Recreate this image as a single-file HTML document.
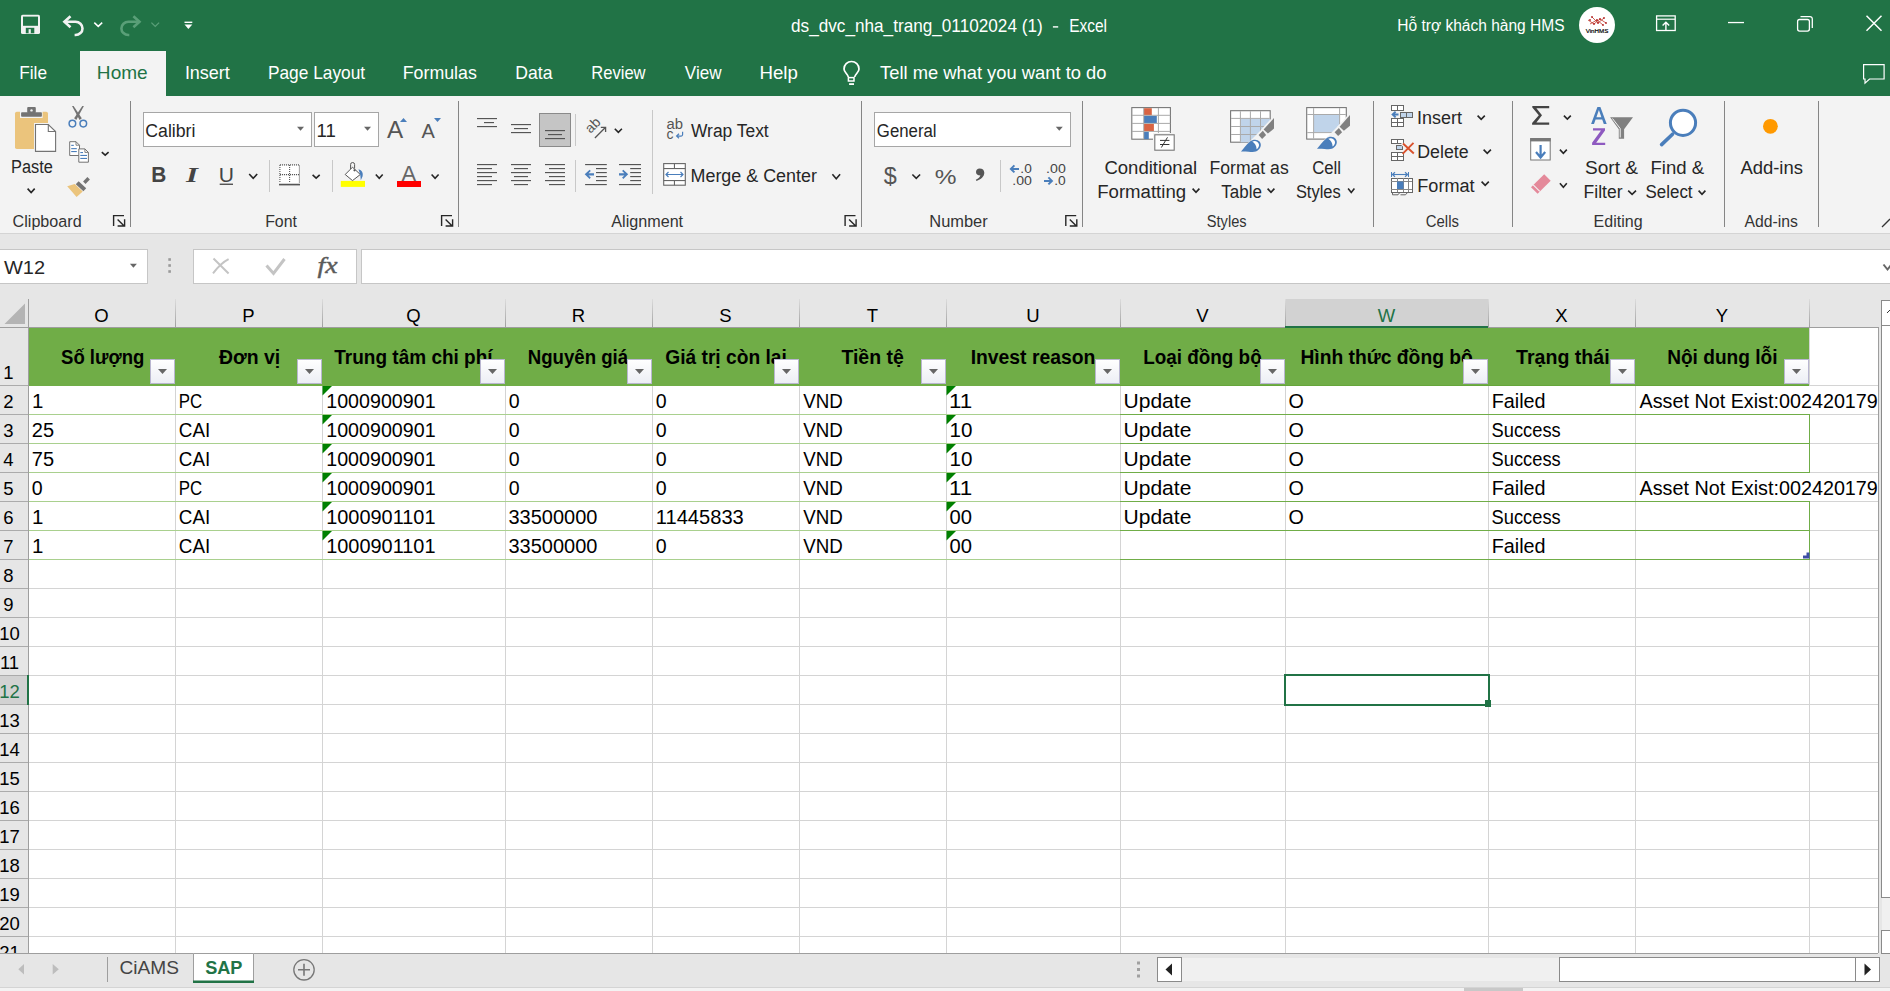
<!DOCTYPE html>
<html><head><meta charset="utf-8"><style>
html,body{margin:0;padding:0;width:1890px;height:991px;overflow:hidden;background:#fff}
svg{display:block;font-family:"Liberation Sans",sans-serif} text{white-space:pre}
</style></head><body>
<svg width="1890" height="991" viewBox="0 0 1890 991">
<rect x="0" y="0" width="1890" height="96" fill="#217346"/>
<rect x="80" y="51" width="86" height="45" fill="#f3f3f3"/>
<rect x="0" y="96" width="1890" height="137" fill="#f3f3f3"/>
<rect x="0" y="233" width="1890" height="1" fill="#d4d4d4"/>
<rect x="0" y="234" width="1890" height="719" fill="#e6e6e6"/>
<text x="791.01" y="31.80" font-size="17.8" font-weight="normal" fill="#ffffff" textLength="251.69" lengthAdjust="spacingAndGlyphs">ds_dvc_nha_trang_01102024 (1)</text>
<rect x="1052.9" y="26.2" width="5.3" height="1.4" fill="#ffffff"/>
<text x="1069.16" y="31.80" font-size="17.8" font-weight="normal" fill="#ffffff" textLength="37.85" lengthAdjust="spacingAndGlyphs">Excel</text>
<text x="1397.26" y="31.00" font-size="16" font-weight="normal" fill="#ffffff" textLength="167.33" lengthAdjust="spacingAndGlyphs">Hỗ trợ khách hàng HMS</text>
<text x="19.22" y="79.40" font-size="19" font-weight="normal" fill="#ffffff" textLength="27.79" lengthAdjust="spacingAndGlyphs">File</text>
<text x="184.88" y="79.40" font-size="19" font-weight="normal" fill="#ffffff" textLength="44.91" lengthAdjust="spacingAndGlyphs">Insert</text>
<text x="267.92" y="79.40" font-size="19" font-weight="normal" fill="#ffffff" textLength="97.18" lengthAdjust="spacingAndGlyphs">Page Layout</text>
<text x="402.78" y="79.40" font-size="19" font-weight="normal" fill="#ffffff" textLength="74.08" lengthAdjust="spacingAndGlyphs">Formulas</text>
<text x="515.29" y="79.40" font-size="19" font-weight="normal" fill="#ffffff" textLength="37.17" lengthAdjust="spacingAndGlyphs">Data</text>
<text x="591.27" y="79.40" font-size="19" font-weight="normal" fill="#ffffff" textLength="54.30" lengthAdjust="spacingAndGlyphs">Review</text>
<text x="684.83" y="79.40" font-size="19" font-weight="normal" fill="#ffffff" textLength="36.66" lengthAdjust="spacingAndGlyphs">View</text>
<text x="759.51" y="79.40" font-size="19" font-weight="normal" fill="#ffffff" textLength="38.36" lengthAdjust="spacingAndGlyphs">Help</text>
<text x="880.03" y="79.40" font-size="19" font-weight="normal" fill="#ffffff" textLength="226.47" lengthAdjust="spacingAndGlyphs">Tell me what you want to do</text>
<text x="96.88" y="79.40" font-size="19" font-weight="normal" fill="#217346" textLength="50.83" lengthAdjust="spacingAndGlyphs">Home</text>
<text x="10.99" y="173.00" font-size="18" font-weight="normal" fill="#262626" textLength="41.78" lengthAdjust="spacingAndGlyphs">Paste</text>
<text x="691.03" y="137.00" font-size="18" font-weight="normal" fill="#262626" textLength="77.65" lengthAdjust="spacingAndGlyphs">Wrap Text</text>
<text x="690.57" y="182.40" font-size="18" font-weight="normal" fill="#262626" textLength="126.28" lengthAdjust="spacingAndGlyphs">Merge &amp; Center</text>
<text x="1104.47" y="173.80" font-size="18" font-weight="normal" fill="#262626" textLength="92.59" lengthAdjust="spacingAndGlyphs">Conditional</text>
<text x="1097.21" y="197.60" font-size="18" font-weight="normal" fill="#262626" textLength="88.87" lengthAdjust="spacingAndGlyphs">Formatting</text>
<text x="1209.59" y="173.80" font-size="18" font-weight="normal" fill="#262626" textLength="79.12" lengthAdjust="spacingAndGlyphs">Format as</text>
<text x="1221.36" y="197.60" font-size="18" font-weight="normal" fill="#262626" textLength="40.49" lengthAdjust="spacingAndGlyphs">Table</text>
<text x="1312.16" y="173.80" font-size="18" font-weight="normal" fill="#262626" textLength="28.89" lengthAdjust="spacingAndGlyphs">Cell</text>
<text x="1295.88" y="197.60" font-size="18" font-weight="normal" fill="#262626" textLength="44.83" lengthAdjust="spacingAndGlyphs">Styles</text>
<text x="1417.08" y="124.20" font-size="18" font-weight="normal" fill="#262626" textLength="44.91" lengthAdjust="spacingAndGlyphs">Insert</text>
<text x="1417.28" y="158.00" font-size="18" font-weight="normal" fill="#262626" textLength="51.32" lengthAdjust="spacingAndGlyphs">Delete</text>
<text x="1417.25" y="192.00" font-size="18" font-weight="normal" fill="#262626" textLength="57.37" lengthAdjust="spacingAndGlyphs">Format</text>
<text x="1585.05" y="174.00" font-size="18" font-weight="normal" fill="#262626" textLength="53.01" lengthAdjust="spacingAndGlyphs">Sort &amp;</text>
<text x="1583.60" y="197.70" font-size="18" font-weight="normal" fill="#262626" textLength="38.91" lengthAdjust="spacingAndGlyphs">Filter</text>
<text x="1650.51" y="174.00" font-size="18" font-weight="normal" fill="#262626" textLength="53.66" lengthAdjust="spacingAndGlyphs">Find &amp;</text>
<text x="1645.55" y="197.70" font-size="18" font-weight="normal" fill="#262626" textLength="47.00" lengthAdjust="spacingAndGlyphs">Select</text>
<text x="1740.40" y="174.00" font-size="18" font-weight="normal" fill="#262626" textLength="62.55" lengthAdjust="spacingAndGlyphs">Add-ins</text>
<text x="12.59" y="226.90" font-size="16.3" font-weight="normal" fill="#333333" textLength="69.04" lengthAdjust="spacingAndGlyphs">Clipboard</text>
<text x="265.13" y="226.90" font-size="16.3" font-weight="normal" fill="#333333" textLength="31.84" lengthAdjust="spacingAndGlyphs">Font</text>
<text x="611.30" y="226.90" font-size="16.3" font-weight="normal" fill="#333333" textLength="71.81" lengthAdjust="spacingAndGlyphs">Alignment</text>
<text x="929.28" y="226.90" font-size="16.3" font-weight="normal" fill="#333333" textLength="58.49" lengthAdjust="spacingAndGlyphs">Number</text>
<text x="1206.77" y="226.90" font-size="16.3" font-weight="normal" fill="#333333" textLength="39.86" lengthAdjust="spacingAndGlyphs">Styles</text>
<text x="1425.75" y="226.90" font-size="16.3" font-weight="normal" fill="#333333" textLength="33.18" lengthAdjust="spacingAndGlyphs">Cells</text>
<text x="1593.52" y="226.90" font-size="16.3" font-weight="normal" fill="#333333" textLength="49.07" lengthAdjust="spacingAndGlyphs">Editing</text>
<text x="1744.50" y="226.90" font-size="16.3" font-weight="normal" fill="#333333" textLength="53.44" lengthAdjust="spacingAndGlyphs">Add-ins</text>
<rect x="143.5" y="112.5" width="168" height="34" fill="#fff" stroke="#a6a6a6" stroke-width="1"/>
<rect x="314.5" y="112.5" width="64" height="34" fill="#fff" stroke="#a6a6a6" stroke-width="1"/>
<rect x="874.5" y="112.5" width="196" height="34" fill="#fff" stroke="#a6a6a6" stroke-width="1"/>
<text x="145.32" y="137.00" font-size="18" font-weight="normal" fill="#262626" textLength="50.11" lengthAdjust="spacingAndGlyphs">Calibri</text>
<text x="316.51" y="137.00" font-size="18" font-weight="normal" fill="#262626" textLength="19.39" lengthAdjust="spacingAndGlyphs">11</text>
<text x="876.86" y="137.00" font-size="18" font-weight="normal" fill="#262626" textLength="59.70" lengthAdjust="spacingAndGlyphs">General</text>
<rect x="130" y="101" width="1" height="126" fill="#858585"/>
<rect x="458" y="101" width="1" height="126" fill="#858585"/>
<rect x="861" y="101" width="1" height="126" fill="#858585"/>
<rect x="1082" y="101" width="1" height="126" fill="#858585"/>
<rect x="1373" y="101" width="1" height="126" fill="#858585"/>
<rect x="1512" y="101" width="1" height="126" fill="#858585"/>
<rect x="1724" y="101" width="1" height="126" fill="#858585"/>
<rect x="1818" y="101" width="1" height="126" fill="#858585"/>
<rect x="-0.5" y="249.5" width="148" height="34" fill="#fff" stroke="#c6c6c6"/>
<rect x="193.5" y="249.5" width="163" height="34" fill="#fff" stroke="#c6c6c6"/>
<rect x="361.5" y="249.5" width="1540" height="34" fill="#fff" stroke="#c6c6c6"/>
<text x="4.00" y="273.90" font-size="18" font-weight="normal" fill="#262626" textLength="41.12" lengthAdjust="spacingAndGlyphs">W12</text>
<rect x="0" y="299" width="1878" height="28" fill="#e6e6e6"/>
<rect x="28" y="328" width="1850" height="625" fill="#ffffff"/>
<rect x="0" y="328" width="28" height="625" fill="#e6e6e6"/>
<rect x="1285" y="299" width="203" height="28" fill="#d2d2d2"/>
<rect x="28" y="385" width="1850" height="1" fill="#d4d4d4"/>
<rect x="0" y="385" width="28" height="1" fill="#ababab"/>
<rect x="28" y="414" width="1850" height="1" fill="#d4d4d4"/>
<rect x="0" y="414" width="28" height="1" fill="#ababab"/>
<rect x="28" y="443" width="1850" height="1" fill="#d4d4d4"/>
<rect x="0" y="443" width="28" height="1" fill="#ababab"/>
<rect x="28" y="472" width="1850" height="1" fill="#d4d4d4"/>
<rect x="0" y="472" width="28" height="1" fill="#ababab"/>
<rect x="28" y="501" width="1850" height="1" fill="#d4d4d4"/>
<rect x="0" y="501" width="28" height="1" fill="#ababab"/>
<rect x="28" y="530" width="1850" height="1" fill="#d4d4d4"/>
<rect x="0" y="530" width="28" height="1" fill="#ababab"/>
<rect x="28" y="559" width="1850" height="1" fill="#d4d4d4"/>
<rect x="0" y="559" width="28" height="1" fill="#ababab"/>
<rect x="28" y="588" width="1850" height="1" fill="#d4d4d4"/>
<rect x="0" y="588" width="28" height="1" fill="#ababab"/>
<rect x="28" y="617" width="1850" height="1" fill="#d4d4d4"/>
<rect x="0" y="617" width="28" height="1" fill="#ababab"/>
<rect x="28" y="646" width="1850" height="1" fill="#d4d4d4"/>
<rect x="0" y="646" width="28" height="1" fill="#ababab"/>
<rect x="28" y="675" width="1850" height="1" fill="#d4d4d4"/>
<rect x="0" y="675" width="28" height="1" fill="#ababab"/>
<rect x="28" y="704" width="1850" height="1" fill="#d4d4d4"/>
<rect x="0" y="704" width="28" height="1" fill="#ababab"/>
<rect x="28" y="733" width="1850" height="1" fill="#d4d4d4"/>
<rect x="0" y="733" width="28" height="1" fill="#ababab"/>
<rect x="28" y="762" width="1850" height="1" fill="#d4d4d4"/>
<rect x="0" y="762" width="28" height="1" fill="#ababab"/>
<rect x="28" y="791" width="1850" height="1" fill="#d4d4d4"/>
<rect x="0" y="791" width="28" height="1" fill="#ababab"/>
<rect x="28" y="820" width="1850" height="1" fill="#d4d4d4"/>
<rect x="0" y="820" width="28" height="1" fill="#ababab"/>
<rect x="28" y="849" width="1850" height="1" fill="#d4d4d4"/>
<rect x="0" y="849" width="28" height="1" fill="#ababab"/>
<rect x="28" y="878" width="1850" height="1" fill="#d4d4d4"/>
<rect x="0" y="878" width="28" height="1" fill="#ababab"/>
<rect x="28" y="907" width="1850" height="1" fill="#d4d4d4"/>
<rect x="0" y="907" width="28" height="1" fill="#ababab"/>
<rect x="28" y="936" width="1850" height="1" fill="#d4d4d4"/>
<rect x="0" y="936" width="28" height="1" fill="#ababab"/>
<rect x="28" y="965" width="1850" height="1" fill="#d4d4d4"/>
<rect x="0" y="965" width="28" height="1" fill="#ababab"/>
<rect x="175" y="328" width="1" height="625" fill="#d4d4d4"/>
<linearGradient id="g175" x1="0" y1="0" x2="0" y2="1"><stop offset="0" stop-color="#dcdcdc"/><stop offset="1" stop-color="#a0a0a0"/></linearGradient>
<rect x="175" y="299" width="1" height="28" fill="url(#g175)"/>
<rect x="322" y="328" width="1" height="625" fill="#d4d4d4"/>
<linearGradient id="g322" x1="0" y1="0" x2="0" y2="1"><stop offset="0" stop-color="#dcdcdc"/><stop offset="1" stop-color="#a0a0a0"/></linearGradient>
<rect x="322" y="299" width="1" height="28" fill="url(#g322)"/>
<rect x="505" y="328" width="1" height="625" fill="#d4d4d4"/>
<linearGradient id="g505" x1="0" y1="0" x2="0" y2="1"><stop offset="0" stop-color="#dcdcdc"/><stop offset="1" stop-color="#a0a0a0"/></linearGradient>
<rect x="505" y="299" width="1" height="28" fill="url(#g505)"/>
<rect x="652" y="328" width="1" height="625" fill="#d4d4d4"/>
<linearGradient id="g652" x1="0" y1="0" x2="0" y2="1"><stop offset="0" stop-color="#dcdcdc"/><stop offset="1" stop-color="#a0a0a0"/></linearGradient>
<rect x="652" y="299" width="1" height="28" fill="url(#g652)"/>
<rect x="799" y="328" width="1" height="625" fill="#d4d4d4"/>
<linearGradient id="g799" x1="0" y1="0" x2="0" y2="1"><stop offset="0" stop-color="#dcdcdc"/><stop offset="1" stop-color="#a0a0a0"/></linearGradient>
<rect x="799" y="299" width="1" height="28" fill="url(#g799)"/>
<rect x="946" y="328" width="1" height="625" fill="#d4d4d4"/>
<linearGradient id="g946" x1="0" y1="0" x2="0" y2="1"><stop offset="0" stop-color="#dcdcdc"/><stop offset="1" stop-color="#a0a0a0"/></linearGradient>
<rect x="946" y="299" width="1" height="28" fill="url(#g946)"/>
<rect x="1120" y="328" width="1" height="625" fill="#d4d4d4"/>
<linearGradient id="g1120" x1="0" y1="0" x2="0" y2="1"><stop offset="0" stop-color="#dcdcdc"/><stop offset="1" stop-color="#a0a0a0"/></linearGradient>
<rect x="1120" y="299" width="1" height="28" fill="url(#g1120)"/>
<rect x="1285" y="328" width="1" height="625" fill="#d4d4d4"/>
<linearGradient id="g1285" x1="0" y1="0" x2="0" y2="1"><stop offset="0" stop-color="#dcdcdc"/><stop offset="1" stop-color="#a0a0a0"/></linearGradient>
<rect x="1285" y="299" width="1" height="28" fill="url(#g1285)"/>
<rect x="1488" y="328" width="1" height="625" fill="#d4d4d4"/>
<linearGradient id="g1488" x1="0" y1="0" x2="0" y2="1"><stop offset="0" stop-color="#dcdcdc"/><stop offset="1" stop-color="#a0a0a0"/></linearGradient>
<rect x="1488" y="299" width="1" height="28" fill="url(#g1488)"/>
<rect x="1635" y="328" width="1" height="625" fill="#d4d4d4"/>
<linearGradient id="g1635" x1="0" y1="0" x2="0" y2="1"><stop offset="0" stop-color="#dcdcdc"/><stop offset="1" stop-color="#a0a0a0"/></linearGradient>
<rect x="1635" y="299" width="1" height="28" fill="url(#g1635)"/>
<rect x="1809" y="328" width="1" height="625" fill="#d4d4d4"/>
<linearGradient id="g1809" x1="0" y1="0" x2="0" y2="1"><stop offset="0" stop-color="#dcdcdc"/><stop offset="1" stop-color="#a0a0a0"/></linearGradient>
<rect x="1809" y="299" width="1" height="28" fill="url(#g1809)"/>
<rect x="0" y="327" width="1878" height="1" fill="#9e9e9e"/>
<rect x="28" y="299" width="1" height="654" fill="#9e9e9e"/>
<rect x="1878" y="327" width="1" height="626" fill="#9e9e9e"/>
<rect x="1285" y="326" width="203" height="2" fill="#217346"/>
<path d="M25,303.5 L25,324 L4.5,324 Z" fill="#b4b4b4"/>
<text x="101.5" y="321.6" font-size="18.5" text-anchor="middle" fill="#000000">O</text>
<text x="248.5" y="321.6" font-size="18.5" text-anchor="middle" fill="#000000">P</text>
<text x="413.5" y="321.6" font-size="18.5" text-anchor="middle" fill="#000000">Q</text>
<text x="578.5" y="321.6" font-size="18.5" text-anchor="middle" fill="#000000">R</text>
<text x="725.5" y="321.6" font-size="18.5" text-anchor="middle" fill="#000000">S</text>
<text x="872.5" y="321.6" font-size="18.5" text-anchor="middle" fill="#000000">T</text>
<text x="1033.0" y="321.6" font-size="18.5" text-anchor="middle" fill="#000000">U</text>
<text x="1202.5" y="321.6" font-size="18.5" text-anchor="middle" fill="#000000">V</text>
<text x="1386.5" y="321.6" font-size="18.5" text-anchor="middle" fill="#217346">W</text>
<text x="1561.5" y="321.6" font-size="18.5" text-anchor="middle" fill="#000000">X</text>
<text x="1722.0" y="321.6" font-size="18.5" text-anchor="middle" fill="#000000">Y</text>
<rect x="0" y="676" width="28" height="28" fill="#d2d2d2"/>
<rect x="27" y="675" width="2" height="30" fill="#217346"/>
<text x="8.5" y="378.5" font-size="18.5" text-anchor="middle" fill="#000000">1</text>
<text x="8.5" y="407.5" font-size="18.5" text-anchor="middle" fill="#000000">2</text>
<text x="8.5" y="436.5" font-size="18.5" text-anchor="middle" fill="#000000">3</text>
<text x="8.5" y="465.5" font-size="18.5" text-anchor="middle" fill="#000000">4</text>
<text x="8.5" y="494.5" font-size="18.5" text-anchor="middle" fill="#000000">5</text>
<text x="8.5" y="523.5" font-size="18.5" text-anchor="middle" fill="#000000">6</text>
<text x="8.5" y="552.5" font-size="18.5" text-anchor="middle" fill="#000000">7</text>
<text x="8.5" y="581.5" font-size="18.5" text-anchor="middle" fill="#000000">8</text>
<text x="8.5" y="610.5" font-size="18.5" text-anchor="middle" fill="#000000">9</text>
<text x="9.5" y="639.5" font-size="18.5" text-anchor="middle" fill="#000000">10</text>
<text x="9.5" y="668.5" font-size="18.5" text-anchor="middle" fill="#000000">11</text>
<text x="9.5" y="697.5" font-size="18.5" text-anchor="middle" fill="#217346">12</text>
<text x="9.5" y="726.5" font-size="18.5" text-anchor="middle" fill="#000000">13</text>
<text x="9.5" y="755.5" font-size="18.5" text-anchor="middle" fill="#000000">14</text>
<text x="9.5" y="784.5" font-size="18.5" text-anchor="middle" fill="#000000">15</text>
<text x="9.5" y="813.5" font-size="18.5" text-anchor="middle" fill="#000000">16</text>
<text x="9.5" y="842.5" font-size="18.5" text-anchor="middle" fill="#000000">17</text>
<text x="9.5" y="871.5" font-size="18.5" text-anchor="middle" fill="#000000">18</text>
<text x="9.5" y="900.5" font-size="18.5" text-anchor="middle" fill="#000000">19</text>
<text x="9.5" y="929.5" font-size="18.5" text-anchor="middle" fill="#000000">20</text>
<text x="9.5" y="958.5" font-size="18.5" text-anchor="middle" fill="#000000">21</text>
<rect x="29" y="328" width="1780" height="58" fill="#70ad47"/>
<rect x="1120" y="385" width="689" height="1" fill="#66a53b"/>
<text x="61.04" y="364.00" font-size="19.5" font-weight="bold" fill="#000000" textLength="83.25" lengthAdjust="spacingAndGlyphs">Số lượng</text>
<text x="219.00" y="364.00" font-size="19.5" font-weight="bold" fill="#000000" textLength="61.17" lengthAdjust="spacingAndGlyphs">Đơn vị</text>
<text x="334.31" y="364.00" font-size="19.5" font-weight="bold" fill="#000000" textLength="158.29" lengthAdjust="spacingAndGlyphs">Trung tâm chi phí</text>
<text x="527.69" y="364.00" font-size="19.5" font-weight="bold" fill="#000000" textLength="100.49" lengthAdjust="spacingAndGlyphs">Nguyên giá</text>
<text x="665.23" y="364.00" font-size="19.5" font-weight="bold" fill="#000000" textLength="121.61" lengthAdjust="spacingAndGlyphs">Giá trị còn lại</text>
<text x="841.41" y="364.00" font-size="19.5" font-weight="bold" fill="#000000" textLength="62.46" lengthAdjust="spacingAndGlyphs">Tiền tệ</text>
<text x="970.65" y="364.00" font-size="19.5" font-weight="bold" fill="#000000" textLength="124.65" lengthAdjust="spacingAndGlyphs">Invest reason</text>
<text x="1143.18" y="364.00" font-size="19.5" font-weight="bold" fill="#000000" textLength="118.50" lengthAdjust="spacingAndGlyphs">Loại đồng bộ</text>
<text x="1300.45" y="364.00" font-size="19.5" font-weight="bold" fill="#000000" textLength="172.39" lengthAdjust="spacingAndGlyphs">Hình thức đồng bộ</text>
<text x="1516.10" y="364.00" font-size="19.5" font-weight="bold" fill="#000000" textLength="93.53" lengthAdjust="spacingAndGlyphs">Trạng thái</text>
<text x="1667.16" y="364.00" font-size="19.5" font-weight="bold" fill="#000000" textLength="110.30" lengthAdjust="spacingAndGlyphs">Nội dung lỗi</text>
<linearGradient id="fb" x1="0" y1="0" x2="0" y2="1"><stop offset="0" stop-color="#ffffff"/><stop offset="1" stop-color="#eceef4"/></linearGradient>
<rect x="150.5" y="359.5" width="24" height="24" fill="url(#fb)" stroke="#b9b6d0" stroke-width="1"/>
<path d="M158,369 L167,369 L162.5,374 Z" fill="#666"/>
<rect x="297.5" y="359.5" width="24" height="24" fill="url(#fb)" stroke="#b9b6d0" stroke-width="1"/>
<path d="M305,369 L314,369 L309.5,374 Z" fill="#666"/>
<rect x="480.5" y="359.5" width="24" height="24" fill="url(#fb)" stroke="#b9b6d0" stroke-width="1"/>
<path d="M488,369 L497,369 L492.5,374 Z" fill="#666"/>
<rect x="627.5" y="359.5" width="24" height="24" fill="url(#fb)" stroke="#b9b6d0" stroke-width="1"/>
<path d="M635,369 L644,369 L639.5,374 Z" fill="#666"/>
<rect x="774.5" y="359.5" width="24" height="24" fill="url(#fb)" stroke="#b9b6d0" stroke-width="1"/>
<path d="M782,369 L791,369 L786.5,374 Z" fill="#666"/>
<rect x="921.5" y="359.5" width="24" height="24" fill="url(#fb)" stroke="#b9b6d0" stroke-width="1"/>
<path d="M929,369 L938,369 L933.5,374 Z" fill="#666"/>
<rect x="1095.5" y="359.5" width="24" height="24" fill="url(#fb)" stroke="#b9b6d0" stroke-width="1"/>
<path d="M1103,369 L1112,369 L1107.5,374 Z" fill="#666"/>
<rect x="1260.5" y="359.5" width="24" height="24" fill="url(#fb)" stroke="#b9b6d0" stroke-width="1"/>
<path d="M1268,369 L1277,369 L1272.5,374 Z" fill="#666"/>
<rect x="1463.5" y="359.5" width="24" height="24" fill="url(#fb)" stroke="#b9b6d0" stroke-width="1"/>
<path d="M1471,369 L1480,369 L1475.5,374 Z" fill="#666"/>
<rect x="1610.5" y="359.5" width="24" height="24" fill="url(#fb)" stroke="#b9b6d0" stroke-width="1"/>
<path d="M1618,369 L1627,369 L1622.5,374 Z" fill="#666"/>
<rect x="1784.5" y="359.5" width="24" height="24" fill="url(#fb)" stroke="#b9b6d0" stroke-width="1"/>
<path d="M1792,369 L1801,369 L1796.5,374 Z" fill="#666"/>
<rect x="29" y="414" width="1091" height="1" fill="#a9d08e"/>
<rect x="1120" y="414" width="689" height="1" fill="#70ad47"/>
<rect x="29" y="443" width="1091" height="1" fill="#a9d08e"/>
<rect x="1120" y="443" width="689" height="1" fill="#70ad47"/>
<rect x="29" y="472" width="1091" height="1" fill="#a9d08e"/>
<rect x="1120" y="472" width="689" height="1" fill="#70ad47"/>
<rect x="29" y="501" width="1091" height="1" fill="#a9d08e"/>
<rect x="1120" y="501" width="689" height="1" fill="#70ad47"/>
<rect x="29" y="530" width="1091" height="1" fill="#a9d08e"/>
<rect x="1120" y="530" width="689" height="1" fill="#70ad47"/>
<rect x="29" y="559" width="1091" height="1" fill="#a9d08e"/>
<rect x="1120" y="559" width="689" height="1" fill="#70ad47"/>
<rect x="1809" y="414" width="1" height="30" fill="#70ad47"/>
<rect x="1809" y="443" width="1" height="30" fill="#70ad47"/>
<rect x="1809" y="501" width="1" height="30" fill="#70ad47"/>
<rect x="1809" y="530" width="1" height="30" fill="#70ad47"/>
<rect x="1809" y="386" width="1" height="28" fill="#ffffff"/>
<rect x="1809" y="473" width="1" height="28" fill="#ffffff"/>
<path d="M1803,558.5 L1809.5,558.5 L1809.5,552.5 L1806.5,552.5 L1806.5,555.5 L1803,555.5 Z" fill="#3e4ea6"/>
<clipPath id="gc"><rect x="29" y="328" width="1849" height="625"/></clipPath>
<g clip-path="url(#gc)">
<text x="31.96" y="407.70" font-size="19.3" font-weight="normal" fill="#000000" textLength="11.38" lengthAdjust="spacingAndGlyphs">1</text>
<text x="178.65" y="407.70" font-size="19.3" font-weight="normal" fill="#000000" textLength="23.41" lengthAdjust="spacingAndGlyphs">PC</text>
<text x="326.23" y="407.70" font-size="19.3" font-weight="normal" fill="#000000" textLength="109.38" lengthAdjust="spacingAndGlyphs">1000900901</text>
<text x="508.82" y="407.70" font-size="19.3" font-weight="normal" fill="#000000" textLength="10.89" lengthAdjust="spacingAndGlyphs">0</text>
<text x="655.82" y="407.70" font-size="19.3" font-weight="normal" fill="#000000" textLength="10.89" lengthAdjust="spacingAndGlyphs">0</text>
<text x="803.21" y="407.70" font-size="19.3" font-weight="normal" fill="#000000" textLength="39.55" lengthAdjust="spacingAndGlyphs">VND</text>
<text x="949.01" y="407.70" font-size="19.3" font-weight="normal" fill="#000000" textLength="23.27" lengthAdjust="spacingAndGlyphs">11</text>
<text x="1123.52" y="407.70" font-size="19.3" font-weight="normal" fill="#000000" textLength="67.82" lengthAdjust="spacingAndGlyphs">Update</text>
<text x="1288.61" y="407.70" font-size="19.3" font-weight="normal" fill="#000000" textLength="15.33" lengthAdjust="spacingAndGlyphs">O</text>
<text x="1491.72" y="407.70" font-size="19.3" font-weight="normal" fill="#000000" textLength="53.84" lengthAdjust="spacingAndGlyphs">Failed</text>
<text x="1639.50" y="407.70" font-size="19.3" font-weight="normal" fill="#000000" textLength="238.34" lengthAdjust="spacingAndGlyphs">Asset Not Exist:002420179</text>
<path d="M322.5,386 L332.0,386 L322.5,395.5 Z" fill="#008000"/>
<path d="M946.5,386 L956.0,386 L946.5,395.5 Z" fill="#008000"/>
<text x="31.80" y="436.70" font-size="19.3" font-weight="normal" fill="#000000" textLength="22.24" lengthAdjust="spacingAndGlyphs">25</text>
<text x="178.86" y="436.70" font-size="19.3" font-weight="normal" fill="#000000" textLength="31.38" lengthAdjust="spacingAndGlyphs">CAI</text>
<text x="326.23" y="436.70" font-size="19.3" font-weight="normal" fill="#000000" textLength="109.38" lengthAdjust="spacingAndGlyphs">1000900901</text>
<text x="508.82" y="436.70" font-size="19.3" font-weight="normal" fill="#000000" textLength="10.89" lengthAdjust="spacingAndGlyphs">0</text>
<text x="655.82" y="436.70" font-size="19.3" font-weight="normal" fill="#000000" textLength="10.89" lengthAdjust="spacingAndGlyphs">0</text>
<text x="803.21" y="436.70" font-size="19.3" font-weight="normal" fill="#000000" textLength="39.55" lengthAdjust="spacingAndGlyphs">VND</text>
<text x="949.45" y="436.70" font-size="19.3" font-weight="normal" fill="#000000" textLength="22.91" lengthAdjust="spacingAndGlyphs">10</text>
<text x="1123.52" y="436.70" font-size="19.3" font-weight="normal" fill="#000000" textLength="67.82" lengthAdjust="spacingAndGlyphs">Update</text>
<text x="1288.61" y="436.70" font-size="19.3" font-weight="normal" fill="#000000" textLength="15.33" lengthAdjust="spacingAndGlyphs">O</text>
<text x="1491.59" y="436.70" font-size="19.3" font-weight="normal" fill="#000000" textLength="69.13" lengthAdjust="spacingAndGlyphs">Success</text>
<path d="M322.5,415 L332.0,415 L322.5,424.5 Z" fill="#008000"/>
<path d="M946.5,415 L956.0,415 L946.5,424.5 Z" fill="#008000"/>
<text x="31.80" y="465.70" font-size="19.3" font-weight="normal" fill="#000000" textLength="22.24" lengthAdjust="spacingAndGlyphs">75</text>
<text x="178.86" y="465.70" font-size="19.3" font-weight="normal" fill="#000000" textLength="31.38" lengthAdjust="spacingAndGlyphs">CAI</text>
<text x="326.23" y="465.70" font-size="19.3" font-weight="normal" fill="#000000" textLength="109.38" lengthAdjust="spacingAndGlyphs">1000900901</text>
<text x="508.82" y="465.70" font-size="19.3" font-weight="normal" fill="#000000" textLength="10.89" lengthAdjust="spacingAndGlyphs">0</text>
<text x="655.82" y="465.70" font-size="19.3" font-weight="normal" fill="#000000" textLength="10.89" lengthAdjust="spacingAndGlyphs">0</text>
<text x="803.21" y="465.70" font-size="19.3" font-weight="normal" fill="#000000" textLength="39.55" lengthAdjust="spacingAndGlyphs">VND</text>
<text x="949.45" y="465.70" font-size="19.3" font-weight="normal" fill="#000000" textLength="22.91" lengthAdjust="spacingAndGlyphs">10</text>
<text x="1123.52" y="465.70" font-size="19.3" font-weight="normal" fill="#000000" textLength="67.82" lengthAdjust="spacingAndGlyphs">Update</text>
<text x="1288.61" y="465.70" font-size="19.3" font-weight="normal" fill="#000000" textLength="15.33" lengthAdjust="spacingAndGlyphs">O</text>
<text x="1491.59" y="465.70" font-size="19.3" font-weight="normal" fill="#000000" textLength="69.13" lengthAdjust="spacingAndGlyphs">Success</text>
<path d="M322.5,444 L332.0,444 L322.5,453.5 Z" fill="#008000"/>
<path d="M946.5,444 L956.0,444 L946.5,453.5 Z" fill="#008000"/>
<text x="31.82" y="494.70" font-size="19.3" font-weight="normal" fill="#000000" textLength="10.89" lengthAdjust="spacingAndGlyphs">0</text>
<text x="178.65" y="494.70" font-size="19.3" font-weight="normal" fill="#000000" textLength="23.41" lengthAdjust="spacingAndGlyphs">PC</text>
<text x="326.23" y="494.70" font-size="19.3" font-weight="normal" fill="#000000" textLength="109.38" lengthAdjust="spacingAndGlyphs">1000900901</text>
<text x="508.82" y="494.70" font-size="19.3" font-weight="normal" fill="#000000" textLength="10.89" lengthAdjust="spacingAndGlyphs">0</text>
<text x="655.82" y="494.70" font-size="19.3" font-weight="normal" fill="#000000" textLength="10.89" lengthAdjust="spacingAndGlyphs">0</text>
<text x="803.21" y="494.70" font-size="19.3" font-weight="normal" fill="#000000" textLength="39.55" lengthAdjust="spacingAndGlyphs">VND</text>
<text x="949.01" y="494.70" font-size="19.3" font-weight="normal" fill="#000000" textLength="23.27" lengthAdjust="spacingAndGlyphs">11</text>
<text x="1123.52" y="494.70" font-size="19.3" font-weight="normal" fill="#000000" textLength="67.82" lengthAdjust="spacingAndGlyphs">Update</text>
<text x="1288.61" y="494.70" font-size="19.3" font-weight="normal" fill="#000000" textLength="15.33" lengthAdjust="spacingAndGlyphs">O</text>
<text x="1491.72" y="494.70" font-size="19.3" font-weight="normal" fill="#000000" textLength="53.84" lengthAdjust="spacingAndGlyphs">Failed</text>
<text x="1639.50" y="494.70" font-size="19.3" font-weight="normal" fill="#000000" textLength="238.34" lengthAdjust="spacingAndGlyphs">Asset Not Exist:002420179</text>
<path d="M322.5,473 L332.0,473 L322.5,482.5 Z" fill="#008000"/>
<path d="M946.5,473 L956.0,473 L946.5,482.5 Z" fill="#008000"/>
<text x="31.96" y="523.70" font-size="19.3" font-weight="normal" fill="#000000" textLength="11.38" lengthAdjust="spacingAndGlyphs">1</text>
<text x="178.86" y="523.70" font-size="19.3" font-weight="normal" fill="#000000" textLength="31.38" lengthAdjust="spacingAndGlyphs">CAI</text>
<text x="326.21" y="523.70" font-size="19.3" font-weight="normal" fill="#000000" textLength="109.32" lengthAdjust="spacingAndGlyphs">1000901101</text>
<text x="508.50" y="523.70" font-size="19.3" font-weight="normal" fill="#000000" textLength="88.87" lengthAdjust="spacingAndGlyphs">33500000</text>
<text x="655.79" y="523.70" font-size="19.3" font-weight="normal" fill="#000000" textLength="88.01" lengthAdjust="spacingAndGlyphs">11445833</text>
<text x="803.21" y="523.70" font-size="19.3" font-weight="normal" fill="#000000" textLength="39.55" lengthAdjust="spacingAndGlyphs">VND</text>
<text x="949.49" y="523.70" font-size="19.3" font-weight="normal" fill="#000000" textLength="22.46" lengthAdjust="spacingAndGlyphs">00</text>
<text x="1123.52" y="523.70" font-size="19.3" font-weight="normal" fill="#000000" textLength="67.82" lengthAdjust="spacingAndGlyphs">Update</text>
<text x="1288.61" y="523.70" font-size="19.3" font-weight="normal" fill="#000000" textLength="15.33" lengthAdjust="spacingAndGlyphs">O</text>
<text x="1491.59" y="523.70" font-size="19.3" font-weight="normal" fill="#000000" textLength="69.13" lengthAdjust="spacingAndGlyphs">Success</text>
<path d="M322.5,502 L332.0,502 L322.5,511.5 Z" fill="#008000"/>
<path d="M946.5,502 L956.0,502 L946.5,511.5 Z" fill="#008000"/>
<text x="31.96" y="552.70" font-size="19.3" font-weight="normal" fill="#000000" textLength="11.38" lengthAdjust="spacingAndGlyphs">1</text>
<text x="178.86" y="552.70" font-size="19.3" font-weight="normal" fill="#000000" textLength="31.38" lengthAdjust="spacingAndGlyphs">CAI</text>
<text x="326.21" y="552.70" font-size="19.3" font-weight="normal" fill="#000000" textLength="109.32" lengthAdjust="spacingAndGlyphs">1000901101</text>
<text x="508.50" y="552.70" font-size="19.3" font-weight="normal" fill="#000000" textLength="88.87" lengthAdjust="spacingAndGlyphs">33500000</text>
<text x="655.82" y="552.70" font-size="19.3" font-weight="normal" fill="#000000" textLength="10.89" lengthAdjust="spacingAndGlyphs">0</text>
<text x="803.21" y="552.70" font-size="19.3" font-weight="normal" fill="#000000" textLength="39.55" lengthAdjust="spacingAndGlyphs">VND</text>
<text x="949.49" y="552.70" font-size="19.3" font-weight="normal" fill="#000000" textLength="22.46" lengthAdjust="spacingAndGlyphs">00</text>
<text x="1491.72" y="552.70" font-size="19.3" font-weight="normal" fill="#000000" textLength="53.84" lengthAdjust="spacingAndGlyphs">Failed</text>
<path d="M322.5,531 L332.0,531 L322.5,540.5 Z" fill="#008000"/>
<path d="M946.5,531 L956.0,531 L946.5,540.5 Z" fill="#008000"/>
</g>
<rect x="1285" y="675" width="204" height="30" fill="none" stroke="#217346" stroke-width="2"/>
<rect x="1485" y="700" width="6" height="7" fill="#217346" stroke="#fff" stroke-width="0"/>
<rect x="0" y="953" width="1890" height="38" fill="#e6e6e6"/>
<rect x="0" y="953" width="1878" height="1" fill="#9e9e9e"/>
<rect x="0" y="987" width="1890" height="4" fill="#f3f3f3"/>
<rect x="0" y="987" width="1890" height="1" fill="#d4d4d4"/>
<rect x="1464" y="988" width="59" height="3" fill="#c8c8c8"/>
<path d="M24,964 L24,974.5 L18.3,969.2 Z" fill="#bdbdbd"/>
<path d="M52.7,964 L52.7,974.5 L58.8,969.2 Z" fill="#bdbdbd"/>
<rect x="107" y="957" width="1" height="25" fill="#9e9e9e"/>
<text x="119.54" y="974.00" font-size="18" font-weight="normal" fill="#444444" textLength="59.44" lengthAdjust="spacingAndGlyphs">CiAMS</text>
<rect x="193.5" y="953" width="60" height="29" fill="#ffffff"/>
<path d="M193.5,982 L193.5,953.5 L253.5,953.5 L253.5,982" fill="none" stroke="#9e9e9e" stroke-width="1"/>
<rect x="193" y="980.5" width="61" height="2.5" fill="#217346"/>
<text x="205.16" y="974.00" font-size="18.5" font-weight="bold" fill="#217346" textLength="37.30" lengthAdjust="spacingAndGlyphs">SAP</text>
<circle cx="304" cy="969.8" r="10.2" fill="none" stroke="#777" stroke-width="1.3"/>
<path d="M298,969.8 H310 M304,963.8 V975.8" stroke="#777" stroke-width="1.6"/>
<rect x="1137" y="961.5" width="3" height="3" fill="#a0a0a0"/>
<rect x="1137" y="968.0" width="3" height="3" fill="#a0a0a0"/>
<rect x="1137" y="974.5" width="3" height="3" fill="#a0a0a0"/>
<rect x="1157.5" y="957.5" width="24" height="24" fill="#ffffff" stroke="#8a8a8a"/>
<path d="M1165.5,969.5 L1172,963.5 L1172,975.5 Z" fill="#222"/>
<rect x="1182" y="958" width="673" height="23" fill="#f0f0f0"/>
<rect x="1559.5" y="957.5" width="296" height="24" fill="#ffffff" stroke="#8a8a8a"/>
<rect x="1855.5" y="957.5" width="24" height="24" fill="#ffffff" stroke="#8a8a8a"/>
<path d="M1871,969.5 L1864.5,963.5 L1864.5,975.5 Z" fill="#222"/>
<rect x="1879" y="299" width="11" height="654" fill="#e6e6e6"/>
<rect x="1881.5" y="300.5" width="12" height="25" fill="#ffffff" stroke="#8a8a8a"/>
<rect x="1881.5" y="325.5" width="12" height="572" fill="#ffffff" stroke="#8a8a8a"/>
<rect x="1882" y="898" width="8" height="32" fill="#f0f0f0"/>
<rect x="1881.5" y="930.5" width="12" height="23" fill="#ffffff" stroke="#8a8a8a"/>
<rect x="21" y="14.8" width="19" height="19.3" rx="1.6" fill="#f2f2f2"/>
<rect x="23" y="16.6" width="15" height="9.2" fill="#217346"/>
<rect x="25.8" y="27.8" width="8.5" height="5.5" fill="#217346"/>
<rect x="28.6" y="29.2" width="2.2" height="4.2" fill="#f2f2f2"/>
<path d="M64.5,21.8 H75.5 A7,6.6 0 0 1 75.5,35 H74.6" fill="none" stroke="#f2f2f2" stroke-width="2.6"/>
<path d="M70.5,16.2 L64.4,21.8 L70.5,27.2" fill="none" stroke="#f2f2f2" stroke-width="2.6"/>
<path d="M94.3,22.6 L98.25,26.4 L102.2,22.6" fill="none" stroke="#ffffff" stroke-width="1.5"/>
<path d="M139.4,21.8 H128.4 A7,6.6 0 0 0 128.4,35 H129.3" fill="none" stroke="#5a9f78" stroke-width="2.6"/>
<path d="M133.4,16.2 L139.5,21.8 L133.4,27.2" fill="none" stroke="#5a9f78" stroke-width="2.6"/>
<path d="M151.4,22.6 L155.25,26.4 L159.1,22.6" fill="none" stroke="#5a9f78" stroke-width="1.3"/>
<rect x="184.5" y="21.6" width="7.8" height="1.4" fill="#ffffff"/>
<path d="M184.5,24.5 L192.3,24.5 L188.4,29 Z" fill="#ffffff"/>
<circle cx="1597" cy="25" r="18" fill="#ffffff"/>
<path d="M1588,20 L1594,24 L1600,19 L1606,23 M1590,24 L1597,20 L1603,25 M1592,17 L1598,23 L1604,18" stroke="#c0392b" stroke-width="0.8" fill="none"/>
<circle cx="1590" cy="20" r="0.9" fill="#b22222"/>
<circle cx="1594" cy="24" r="0.9" fill="#b22222"/>
<circle cx="1600" cy="19" r="0.9" fill="#b22222"/>
<circle cx="1606" cy="23" r="0.9" fill="#b22222"/>
<circle cx="1597" cy="20" r="0.9" fill="#b22222"/>
<circle cx="1603" cy="25" r="0.9" fill="#b22222"/>
<circle cx="1592" cy="17" r="0.9" fill="#b22222"/>
<circle cx="1598" cy="23" r="0.9" fill="#b22222"/>
<circle cx="1604" cy="18" r="0.9" fill="#b22222"/>
<text x="1597" y="32.5" font-size="6.2" text-anchor="middle" fill="#000" stroke="#000" stroke-width="0.2">VinHMS</text>
<rect x="1656.6" y="15.9" width="18.6" height="14.6" fill="none" stroke="#fff" stroke-width="1.3"/>
<rect x="1656.6" y="18.6" width="18.6" height="1.2" fill="#fff"/>
<path d="M1665.9,30.5 V22.4 M1662.6,25.4 L1665.9,22.2 L1669.2,25.4" fill="none" stroke="#fff" stroke-width="1.4"/>
<rect x="1728" y="21.9" width="16" height="1.3" fill="#fff"/>
<rect x="1797.6" y="19.5" width="11.8" height="11.6" rx="2" fill="none" stroke="#fff" stroke-width="1.3"/>
<path d="M1800.5,16.6 H1810 A2.3,2.3 0 0 1 1812.3,18.9 V28" fill="none" stroke="#fff" stroke-width="1.3"/>
<path d="M1866.5,15.8 L1881.5,30.8 M1881.5,15.8 L1866.5,30.8" stroke="#fff" stroke-width="1.5"/>
<path d="M1863.6,64.6 H1884.1 V79 H1869.5 L1865,83.2 V79 H1863.6 Z" fill="none" stroke="#fff" stroke-width="1.2"/>
<path d="M848.3,77 C848,74.2 844,72.4 844,69 A7.5,7.5 0 0 1 859,69 C859,72.4 855,74.2 854.7,77" fill="none" stroke="#fff" stroke-width="1.7"/>
<rect x="848.4" y="77.6" width="5.6" height="3.4" fill="none" stroke="#fff" stroke-width="1.5"/>
<rect x="849.1" y="83.2" width="4.9" height="1.8" fill="#fff"/>
<rect x="15" y="111.8" width="33" height="37.3" rx="1.8" fill="#ebc47c"/>
<rect x="20" y="111" width="22.6" height="7" fill="#f3f3f3"/>
<rect x="21.1" y="112.2" width="20.8" height="4.5" rx="0.8" fill="#737373"/>
<rect x="27.2" y="107.1" width="8.6" height="6" rx="1" fill="#737373"/>
<circle cx="31.5" cy="110.4" r="1.2" fill="#f3f3f3"/>
<path d="M34,123 H49 L57.2,130.8 V153 H34 Z" fill="#f3f3f3"/>
<path d="M35.5,124.5 H48.3 L55.6,131.5 V151.4 H35.5 Z" fill="#fff" stroke="#737373" stroke-width="1.1"/>
<path d="M48.3,124.5 V131.5 H55.6" fill="none" stroke="#737373" stroke-width="1.1"/>
<path d="M27.6,188.6 L31.15,192.5 L34.699999999999996,188.6" fill="none" stroke="#262626" stroke-width="1.6"/>
<path d="M72,106 L73.6,106 L81.8,118.2 L79.6,120 Z" fill="#737373"/>
<path d="M83.9,106 L82.3,106 L74.1,118.2 L76.3,120 Z" fill="#737373"/>
<circle cx="72.4" cy="123.6" r="3.3" fill="none" stroke="#4a7ebb" stroke-width="1.5"/>
<circle cx="83.3" cy="123.6" r="3.3" fill="none" stroke="#4a7ebb" stroke-width="1.5"/>
<path d="M69.7,141.7 H76.0 L79.5,145.2 V155.5 H69.7 Z" fill="#fff" stroke="#737373" stroke-width="1"/>
<path d="M76.0,141.7 V145.2 H79.5" fill="none" stroke="#737373" stroke-width="0.9"/>
<path d="M78.8,148.9 H84.9 L88.4,152.4 V162.2 H78.8 Z" fill="#fff" stroke="#737373" stroke-width="1"/>
<path d="M84.9,148.9 V152.4 H88.4" fill="none" stroke="#737373" stroke-width="0.9"/>
<rect x="71.2" y="144.8" width="2.5999999999999943" height="1.1" fill="#4a7ebb"/>
<rect x="71.2" y="148.1" width="5.599999999999994" height="1.1" fill="#4a7ebb"/>
<rect x="71.2" y="151.0" width="5.599999999999994" height="1.1" fill="#4a7ebb"/>
<rect x="80.3" y="152.0" width="2.700000000000003" height="1.1" fill="#4a7ebb"/>
<rect x="80.3" y="154.9" width="6.700000000000003" height="1.1" fill="#4a7ebb"/>
<rect x="80.3" y="157.9" width="6.700000000000003" height="1.1" fill="#4a7ebb"/>
<path d="M101.8,152.1 L105.2,155.20000000000002 L108.60000000000001,152.1" fill="none" stroke="#262626" stroke-width="1.6"/>
<path d="M67.2,186.3 L74.7,184 L82.7,191.4 L76.6,197.1 Z" fill="#ebc47c"/>
<path d="M75.8,184.2 L78.6,181.2 L86.2,188.2 L83.4,191.2 Z" fill="#737373"/>
<path d="M83.1,181.4 L87.4,177 L89.9,179.5 L85.5,184 Z" fill="#737373"/>
<path d="M113.6,226 V215.6 H124" fill="none" stroke="#262626" stroke-width="1.4"/>
<path d="M117.6,219.4 L124.2,226 M117.6,226 H124.6 V219.2" fill="none" stroke="#262626" stroke-width="1.4"/>
<path d="M441.6,226 V215.6 H452" fill="none" stroke="#262626" stroke-width="1.4"/>
<path d="M445.6,219.4 L452.2,226 M445.6,226 H452.6 V219.2" fill="none" stroke="#262626" stroke-width="1.4"/>
<path d="M845.1,226 V215.6 H855.5" fill="none" stroke="#262626" stroke-width="1.4"/>
<path d="M849.1,219.4 L855.7,226 M849.1,226 H856.1 V219.2" fill="none" stroke="#262626" stroke-width="1.4"/>
<path d="M1065.8,226 V215.6 H1076.2" fill="none" stroke="#262626" stroke-width="1.4"/>
<path d="M1069.8,219.4 L1076.4,226 M1069.8,226 H1076.8 V219.2" fill="none" stroke="#262626" stroke-width="1.4"/>
<path d="M297.0,126.80000000000001 H304.0 L300.5,130.8 Z" fill="#666666"/>
<path d="M364.0,126.80000000000001 H371.0 L367.5,130.8 Z" fill="#666666"/>
<text x="387.00" y="138.00" font-size="24" font-weight="normal" fill="#555555" textLength="16.17" lengthAdjust="spacingAndGlyphs">A</text>
<path d="M400,122 L403.5,118 L407,122 Z" fill="#4a7ebb"/>
<text x="421.60" y="138.00" font-size="20.2" font-weight="normal" fill="#555555" textLength="13.34" lengthAdjust="spacingAndGlyphs">A</text>
<path d="M434,118 L441,118 L437.5,122 Z" fill="#4a7ebb"/>
<text x="151.14" y="182.00" font-size="22" font-weight="bold" fill="#444444" textLength="15.04" lengthAdjust="spacingAndGlyphs">B</text>
<text x="186" y="182" font-size="22" font-weight="bold" font-style="italic" font-family="Liberation Serif" fill="#444" textLength="12" lengthAdjust="spacingAndGlyphs">I</text>
<text x="218.82" y="181.50" font-size="21" font-weight="normal" fill="#444444" textLength="15.20" lengthAdjust="spacingAndGlyphs">U</text>
<rect x="219.7" y="183.6" width="13.3" height="1.3" fill="#444"/>
<path d="M249.2,174.0 L253.2,178.4 L257.2,174.0" fill="none" stroke="#262626" stroke-width="1.6"/>
<rect x="269" y="160" width="1" height="32" fill="#c8c8c8"/>
<rect x="279.5" y="164.5" width="20" height="18.5" fill="#fff"/>
<path d="M279.9,164.9 H299.4 V183 M279.9,164.9 V183 M289.6,164.9 V183 M279.9,174.6 H299.4" fill="none" stroke="#555" stroke-width="1.1" stroke-dasharray="1.1,0.9"/>
<rect x="279" y="183.8" width="21" height="1.6" fill="#555"/>
<path d="M312.6,174.79999999999998 L316.15,178.20000000000002 L319.7,174.79999999999998" fill="none" stroke="#262626" stroke-width="1.6"/>
<rect x="332" y="160" width="1" height="32" fill="#c8c8c8"/>
<rect x="340.8" y="180.9" width="24.2" height="6" fill="#ffff00"/>
<path d="M345.2,174.5 L352.5,167.2 L360.3,174.5 L352.5,180.6 Z" fill="#fff" stroke="#555" stroke-width="1"/>
<path d="M350.6,169 V164.5 A2,2 0 0 1 354.6,164.5 V168.5" fill="none" stroke="#555" stroke-width="1"/>
<circle cx="354.5" cy="170.3" r="1.1" fill="#555"/>
<path d="M358.5,169.2 C362,170 363.5,173 362.5,176.5 L360.8,180.3 L360.3,175 Z" fill="#4a7ebb"/>
<path d="M375.8,174.5 L379.25,178.3 L382.7,174.5" fill="none" stroke="#262626" stroke-width="1.6"/>
<rect x="397" y="181" width="24" height="6" fill="#ff0000"/>
<text x="401.40" y="180.60" font-size="21.5" font-weight="normal" fill="#666666" textLength="14.65" lengthAdjust="spacingAndGlyphs">A</text>
<path d="M431.6,174.5 L435.1,178.3 L438.59999999999997,174.5" fill="none" stroke="#262626" stroke-width="1.6"/>
<rect x="477" y="118" width="20" height="1.15" fill="#555555"/>
<rect x="484" y="122" width="10" height="1.15" fill="#555555"/>
<rect x="477" y="126" width="20" height="1.15" fill="#555555"/>
<rect x="511" y="124" width="20" height="1.15" fill="#555555"/>
<rect x="514" y="128" width="14" height="1.15" fill="#555555"/>
<rect x="511" y="132" width="20" height="1.15" fill="#555555"/>
<rect x="539.5" y="113.5" width="31" height="33" fill="#c5c5c5" stroke="#8a8a8a" stroke-width="1"/>
<rect x="545" y="130" width="20" height="1.15" fill="#555555"/>
<rect x="548" y="134" width="14" height="1.15" fill="#555555"/>
<rect x="545" y="138" width="20" height="1.15" fill="#555555"/>
<rect x="575" y="114" width="1" height="32" fill="#c8c8c8"/>
<rect x="575" y="160" width="1" height="32" fill="#c8c8c8"/>
<rect x="652" y="110" width="1" height="84" fill="#c8c8c8"/>
<rect x="477" y="164" width="20" height="1.15" fill="#555555"/>
<rect x="511" y="164" width="20" height="1.15" fill="#555555"/>
<rect x="545" y="164" width="20" height="1.15" fill="#555555"/>
<rect x="477" y="168" width="15" height="1.15" fill="#555555"/>
<rect x="514" y="168" width="14" height="1.15" fill="#555555"/>
<rect x="549" y="168" width="16" height="1.15" fill="#555555"/>
<rect x="477" y="172" width="20" height="1.15" fill="#555555"/>
<rect x="511" y="172" width="20" height="1.15" fill="#555555"/>
<rect x="545" y="172" width="20" height="1.15" fill="#555555"/>
<rect x="477" y="176" width="15" height="1.15" fill="#555555"/>
<rect x="514" y="176" width="14" height="1.15" fill="#555555"/>
<rect x="549" y="176" width="16" height="1.15" fill="#555555"/>
<rect x="477" y="180" width="20" height="1.15" fill="#555555"/>
<rect x="511" y="180" width="20" height="1.15" fill="#555555"/>
<rect x="545" y="180" width="20" height="1.15" fill="#555555"/>
<rect x="477" y="184" width="15" height="1.15" fill="#555555"/>
<rect x="514" y="184" width="14" height="1.15" fill="#555555"/>
<rect x="549" y="184" width="16" height="1.15" fill="#555555"/>
<text x="0" y="0" font-size="14" fill="#555" transform="translate(590.5,134) rotate(-45)">ab</text>
<path d="M594.9,138 L605.6,127.3 M600.8,127.3 H605.6 V132.1" fill="none" stroke="#555" stroke-width="1.3"/>
<path d="M614.8000000000001,128.7 L618.35,132.3 L621.9,128.7" fill="none" stroke="#262626" stroke-width="1.6"/>
<rect x="585.1" y="164" width="21.699999999999932" height="1.15" fill="#555555"/>
<rect x="585.1" y="184" width="21.699999999999932" height="1.15" fill="#555555"/>
<rect x="596" y="168" width="10.799999999999955" height="1.15" fill="#555555"/>
<rect x="596" y="172" width="10.799999999999955" height="1.15" fill="#555555"/>
<rect x="596" y="176" width="10.799999999999955" height="1.15" fill="#555555"/>
<rect x="596" y="180" width="10.799999999999955" height="1.15" fill="#555555"/>
<path d="M584.7,174.3 L589.6,169.8 L590.8,171 L588.5,173.2 H594 V175.4 H588.5 L590.8,177.6 L589.6,178.9 Z" fill="#4a7ebb"/>
<rect x="619" y="164" width="22" height="1.15" fill="#555555"/>
<rect x="619" y="184" width="22" height="1.15" fill="#555555"/>
<rect x="630.2" y="168" width="10.799999999999955" height="1.15" fill="#555555"/>
<rect x="630.2" y="172" width="10.799999999999955" height="1.15" fill="#555555"/>
<rect x="630.2" y="176" width="10.799999999999955" height="1.15" fill="#555555"/>
<rect x="630.2" y="180" width="10.799999999999955" height="1.15" fill="#555555"/>
<path d="M628.2,174.3 L623.3,169.8 L622.1,171 L624.4,173.2 H619 V175.4 H624.4 L622.1,177.6 L623.3,178.9 Z" fill="#4a7ebb"/>
<text x="666.5" y="128.9" font-size="14" fill="#555" textLength="16.5" lengthAdjust="spacingAndGlyphs">ab</text>
<text x="666.5" y="138.7" font-size="14" fill="#555">c</text>
<path d="M682.6,131.8 V134.5 A1.6,1.6 0 0 1 681,136.1 H676.8 M679,133.8 L676.6,136.1 L679,138.3" fill="none" stroke="#4a7ebb" stroke-width="1.2"/>
<rect x="663.7" y="163.6" width="21.6" height="21.6" fill="#fff" stroke="#666" stroke-width="1.1"/>
<rect x="663.7" y="168" width="21.59999999999991" height="1.1" fill="#666"/>
<rect x="663.7" y="180" width="21.59999999999991" height="1.1" fill="#666"/>
<rect x="673.9" y="163.6" width="1.1" height="4.7" fill="#666"/>
<rect x="673.9" y="180.5" width="1.1" height="4.7" fill="#666"/>
<path d="M666,174.5 H683 M668.5,172 L666,174.5 L668.5,177 M680.5,172 L683,174.5 L680.5,177" fill="none" stroke="#4a7ebb" stroke-width="1.2"/>
<path d="M832.4,174.29999999999998 L836.25,178.70000000000002 L840.1,174.29999999999998" fill="none" stroke="#262626" stroke-width="1.6"/>
<path d="M1055.8,126.80000000000001 H1062.8 L1059.3,130.8 Z" fill="#666666"/>
<text x="883.77" y="184.20" font-size="24.5" font-weight="normal" fill="#555555" textLength="13.01" lengthAdjust="spacingAndGlyphs">$</text>
<path d="M912.4,174.5 L916.25,178.3 L920.1,174.5" fill="none" stroke="#262626" stroke-width="1.6"/>
<text x="934.82" y="184.00" font-size="20" font-weight="normal" fill="#555555" textLength="21.74" lengthAdjust="spacingAndGlyphs">%</text>
<path d="M979.5,168.5 C982.5,168.5 984.3,170 984.3,172.8 C984.3,176.5 981,179.6 976.5,181 L975.8,179.8 C978.5,178.5 980,177 980.4,175.5 C977.5,175.5 976,174 976,172 C976,170 977.5,168.5 979.5,168.5 Z" fill="#555"/>
<rect x="1000" y="160" width="1" height="32" fill="#c8c8c8"/>
<path d="M1019,168.9 H1011.4 M1014.4,165.4 L1010.9,168.9 L1014.4,172.4" fill="none" stroke="#4a7ebb" stroke-width="2"/>
<text x="1020.37" y="172.80" font-size="13" font-weight="normal" fill="#444444" textLength="11.39" lengthAdjust="spacingAndGlyphs">.0</text>
<text x="1012.23" y="184.80" font-size="13" font-weight="normal" fill="#444444" textLength="19.64" lengthAdjust="spacingAndGlyphs">.00</text>
<text x="1046.13" y="172.80" font-size="13" font-weight="normal" fill="#444444" textLength="19.64" lengthAdjust="spacingAndGlyphs">.00</text>
<path d="M1044,180.9 H1051.4 M1048.4,177.4 L1051.9,180.9 L1048.4,184.4" fill="none" stroke="#4a7ebb" stroke-width="2"/>
<text x="1054.16" y="184.80" font-size="13" font-weight="normal" fill="#444444" textLength="11.51" lengthAdjust="spacingAndGlyphs">.0</text>
<rect x="1131.8" y="107.6" width="38.6" height="31.6" fill="#fff" stroke="#777" stroke-width="1.1"/>
<rect x="1144" y="108.2" width="7.8" height="7.1" fill="#d96443"/>
<rect x="1144" y="115.9" width="12.8" height="7.1" fill="#4a7ebb"/>
<rect x="1144" y="124" width="9.9" height="7.1" fill="#d96443"/>
<rect x="1144" y="132" width="4.8" height="7.1" fill="#4a7ebb"/>
<rect x="1143.2" y="108" width="1" height="31" fill="#aaa"/>
<rect x="1157.9" y="108" width="1" height="31" fill="#aaa"/>
<rect x="1132" y="114.8" width="38.2" height="1" fill="#aaa"/>
<rect x="1132" y="122.9" width="38.2" height="1" fill="#aaa"/>
<rect x="1132" y="130.9" width="38.2" height="1" fill="#aaa"/>
<rect x="1153" y="133" width="23" height="19" fill="#f3f3f3"/>
<rect x="1154.8" y="134.8" width="19.4" height="15.4" fill="#fff" stroke="#777" stroke-width="1.1"/>
<path d="M1160,140.4 H1169.4 M1160,144.5 H1169.4 M1161.4,147.5 L1167.5,137.3" fill="none" stroke="#333" stroke-width="1"/>
<rect x="1230.6" y="110.7" width="39.600000000000136" height="31.499999999999986" fill="#fff" stroke="#777" stroke-width="1.1"/>
<path d="M1240.7,118.8 H1270 V124 L1250,142.2 H1240.7 Z" fill="#c0d4ea"/>
<rect x="1239.9" y="111.2" width="1" height="30.499999999999986" fill="#aaa"/>
<rect x="1249.9" y="111.2" width="1" height="30.499999999999986" fill="#aaa"/>
<rect x="1260.0" y="111.2" width="1" height="30.499999999999986" fill="#aaa"/>
<rect x="1231.1" y="117.9" width="38.600000000000136" height="1" fill="#aaa"/>
<rect x="1231.1" y="126.0" width="38.600000000000136" height="1" fill="#aaa"/>
<rect x="1231.1" y="134.0" width="38.600000000000136" height="1" fill="#aaa"/>
<rect x="1306.7" y="107.6" width="39.59999999999991" height="31.5" fill="#fff" stroke="#777" stroke-width="1.1"/>
<rect x="1313.9" y="114.9" width="25.4" height="17.5" fill="#c0d4ea"/>
<rect x="1313.1" y="108.1" width="1" height="30.5" fill="#aaa"/>
<rect x="1339.1" y="108.1" width="1" height="30.5" fill="#aaa"/>
<rect x="1307.2" y="114.0" width="38.59999999999991" height="1" fill="#aaa"/>
<rect x="1307.2" y="132.1" width="38.59999999999991" height="1" fill="#aaa"/>
<path d="M1271.5,119.6 V143.5 H1247.6 Z" fill="#f3f3f3"/>
<path d="M1347.5,116.6 V140.2 H1323.9 Z" fill="#f3f3f3"/>
<g transform="translate(0,0)">
<path d="M1275.5,114 L1276,128.6 L1268.5,136 L1261.2,129.5 Z" fill="#f3f3f3"/>
<path d="M1274,117.9 L1274,128.6 L1267.9,133.6 L1263.6,129.6 Z" fill="#808080"/>
<path d="M1258.6,135 L1262.9,130.7 L1266.1,135 L1262.1,138.9 Z" fill="#808080"/>
<path d="M1241,151.6 C1244,148 1246,145 1250,141.5 C1253,139 1257.5,139 1259.8,141.8 C1262,145 1260.5,149 1257,151 C1254,152.3 1250,152 1241,151.6 Z" fill="#4a7ebb"/>
<path d="M1252.3,141.6 C1255,140.3 1258.2,141.4 1259,144.5 C1259.3,146.5 1258,148.5 1256.6,149.2 C1256.5,146 1255,143.3 1252.3,141.6 Z" fill="#fff"/>
</g>
<g transform="translate(76,-2.8)">
<path d="M1275.5,114 L1276,128.6 L1268.5,136 L1261.2,129.5 Z" fill="#f3f3f3"/>
<path d="M1274,117.9 L1274,128.6 L1267.9,133.6 L1263.6,129.6 Z" fill="#808080"/>
<path d="M1258.6,135 L1262.9,130.7 L1266.1,135 L1262.1,138.9 Z" fill="#808080"/>
<path d="M1241,151.6 C1244,148 1246,145 1250,141.5 C1253,139 1257.5,139 1259.8,141.8 C1262,145 1260.5,149 1257,151 C1254,152.3 1250,152 1241,151.6 Z" fill="#4a7ebb"/>
<path d="M1252.3,141.6 C1255,140.3 1258.2,141.4 1259,144.5 C1259.3,146.5 1258,148.5 1256.6,149.2 C1256.5,146 1255,143.3 1252.3,141.6 Z" fill="#fff"/>
</g>
<path d="M1192.6,188.6 L1196.0,192.4 L1199.4,188.6" fill="none" stroke="#262626" stroke-width="1.6"/>
<path d="M1267.6,188.6 L1271.0,192.4 L1274.4,188.6" fill="none" stroke="#262626" stroke-width="1.6"/>
<path d="M1348.1,188.6 L1351.25,192.4 L1354.4,188.6" fill="none" stroke="#262626" stroke-width="1.6"/>
<rect x="1391.5" y="105.5" width="12" height="5" fill="#fff" stroke="#666" stroke-width="1"/>
<rect x="1397" y="105" width="1" height="5" fill="#666"/>
<rect x="1400.5" y="112.5" width="12" height="5" fill="#c0d4ea" stroke="#666" stroke-width="1"/>
<rect x="1406" y="112" width="1" height="5" fill="#666"/>
<path d="M1398.5,114.5 H1393 M1395.6,111.6 L1392.6,114.5 L1395.6,117.4" fill="none" stroke="#4a7ebb" stroke-width="1.9"/>
<rect x="1391.5" y="118.5" width="12" height="8" fill="#fff" stroke="#666" stroke-width="1"/>
<rect x="1397" y="118" width="1" height="8" fill="#666"/>
<rect x="1391" y="122" width="12" height="1" fill="#666"/>
<rect x="1391.5" y="139.5" width="12" height="4" fill="#fff" stroke="#666" stroke-width="1"/>
<rect x="1397" y="139" width="1" height="4" fill="#666"/>
<rect x="1396.5" y="145.5" width="6" height="4" fill="#c0d4ea" stroke="#666" stroke-width="1"/>
<rect x="1391.5" y="152.5" width="12" height="8" fill="#fff" stroke="#666" stroke-width="1"/>
<rect x="1397" y="152" width="1" height="8" fill="#666"/>
<rect x="1391" y="156" width="12" height="1" fill="#666"/>
<path d="M1401.5,143.3 L1413.8,153.5" fill="none" stroke="#f3f3f3" stroke-width="3"/>
<path d="M1403,143.5 L1413.8,153.5 M1413.5,142.9 L1402.6,153.8" fill="none" stroke="#d9512c" stroke-width="1.9"/>
<path d="M1392.5,174.5 H1407.5" stroke="#4a7ebb" stroke-width="1.1"/>
<path d="M1395,172.2 L1392.4,174.5 L1395,176.8 M1405,172.2 L1407.6,174.5 L1405,176.8" fill="none" stroke="#4a7ebb" stroke-width="1.2"/>
<rect x="1391" y="172" width="1" height="5" fill="#4a7ebb"/>
<rect x="1408" y="172" width="1" height="5" fill="#4a7ebb"/>
<rect x="1391.5" y="178.5" width="21" height="14" fill="#fff" stroke="#666" stroke-width="1"/>
<rect x="1391" y="181" width="21" height="1" fill="#888"/>
<rect x="1391" y="189" width="21" height="1" fill="#888"/>
<rect x="1397" y="178" width="1" height="14" fill="#888"/>
<rect x="1403" y="178" width="1" height="14" fill="#888"/>
<rect x="1408" y="178" width="1" height="14" fill="#888"/>
<rect x="1397" y="181.5" width="6.5" height="7.5" fill="#4a7ebb"/>
<path d="M1392.5,192.5 V194.8 H1398 L1399.8,192.5 M1400.5,194.8 H1405.5 L1407.5,192.5" fill="none" stroke="#666" stroke-width="1"/>
<path d="M1477.6,115.6 L1481.2,119.4 L1484.8000000000002,115.6" fill="none" stroke="#262626" stroke-width="1.6"/>
<path d="M1483.6,149.6 L1487.25,153.4 L1490.9,149.6" fill="none" stroke="#262626" stroke-width="1.6"/>
<path d="M1481.6,181.6 L1485.2,185.4 L1488.8000000000002,181.6" fill="none" stroke="#262626" stroke-width="1.6"/>
<path d="M1532.3,106 H1549.2 V108.2 H1536.4 L1542,115.3 L1536.4,122.5 H1549.2 V124.7 H1532.1 V123 L1538.8,115.3 L1532.3,107.6 Z" fill="#444"/>
<path d="M1563.8999999999999,115.6 L1567.35,119.10000000000001 L1570.8000000000002,115.6" fill="none" stroke="#262626" stroke-width="1.6"/>
<rect x="1530.7" y="138.6" width="19.5" height="21.4" fill="#fff" stroke="#777" stroke-width="1"/>
<rect x="1530.2" y="138.1" width="20.5" height="3.3" fill="#777"/>
<path d="M1540.6,144.9 V156 M1536,152 L1540.6,157.5 L1545.2,152" fill="none" stroke="#4a7ebb" stroke-width="2.2"/>
<path d="M1559.8999999999999,149.6 L1563.35,153.4 L1566.8000000000002,149.6" fill="none" stroke="#262626" stroke-width="1.6"/>
<path d="M1531,187.3 L1544.2,174.2 L1550.7,180.7 L1537.6,193.8 Z" fill="#e4899a"/>
<path d="M1533.2,184.8 L1539.8,191.3" stroke="#f3f3f3" stroke-width="1.1"/>
<path d="M1559.8999999999999,183.29999999999998 L1563.35,187.20000000000002 L1566.8000000000002,183.29999999999998" fill="none" stroke="#262626" stroke-width="1.6"/>
<path d="M1591.1,124 L1597.4,106.9 H1600.4 L1606.7,124 H1603.8 L1602.2,119.5 H1595.6 L1594,124 Z M1596.4,117.2 H1601.4 L1598.9,110 Z" fill="#4a7ebb" fill-rule="evenodd"/>
<path d="M1593,128.3 H1605 V130.4 L1596.2,142.8 H1605.2 V144.9 H1592.1 V142.8 L1601,130.4 H1593 Z" fill="#8e5ac0"/>
<path d="M1610.1,117.2 H1633 L1624.1,129.3 V138.8 H1618.8 V129.3 Z" fill="#808080"/>
<path d="M1612.5,118.5 L1620.2,128.5 V137.5" fill="none" stroke="#fff" stroke-width="0.9"/>
<circle cx="1683" cy="122.8" r="12.6" fill="#fff" stroke="#4a7ebb" stroke-width="3"/>
<path d="M1661.6,144.6 L1672.5,134.2" stroke="#4a7ebb" stroke-width="3.6" stroke-linecap="round"/>
<path d="M1628.1999999999998,190.6 L1632.1,194.4 L1636.0,190.6" fill="none" stroke="#262626" stroke-width="1.6"/>
<path d="M1698.6,190.6 L1702.0,194.4 L1705.4,190.6" fill="none" stroke="#262626" stroke-width="1.6"/>
<circle cx="1770.4" cy="126.3" r="7.4" fill="#ff9900"/>
<path d="M1882,227 L1890,219" stroke="#333" stroke-width="1.3"/>
<rect x="168.3" y="258.2" width="2.6" height="2.6" fill="#9a9a9a"/>
<rect x="168.3" y="264.2" width="2.6" height="2.6" fill="#9a9a9a"/>
<rect x="168.3" y="270.2" width="2.6" height="2.6" fill="#9a9a9a"/>
<path d="M213,273.3 C218,267 223,262 228.6,259.2 M213.5,258.5 L228.6,273.5" fill="none" stroke="#c4c4c4" stroke-width="2"/>
<path d="M266.5,265.5 L273.5,273.5 L284.5,259" fill="none" stroke="#c4c4c4" stroke-width="3"/>
<text x="317.5" y="272.5" font-size="23" font-style="italic" font-family="Liberation Serif" fill="#5a5a5a" stroke="#5a5a5a" stroke-width="0.4" textLength="20" lengthAdjust="spacingAndGlyphs">fx</text>
<path d="M1883.5,264.5 L1887.5,269.5 L1891.5,264.5" fill="none" stroke="#666" stroke-width="2"/>
<path d="M129.9,263.7 H136.9 L133.4,267.7 Z" fill="#666666"/>
<path d="M1887,313 L1890,310" stroke="#333" stroke-width="1"/>
</svg></body></html>
